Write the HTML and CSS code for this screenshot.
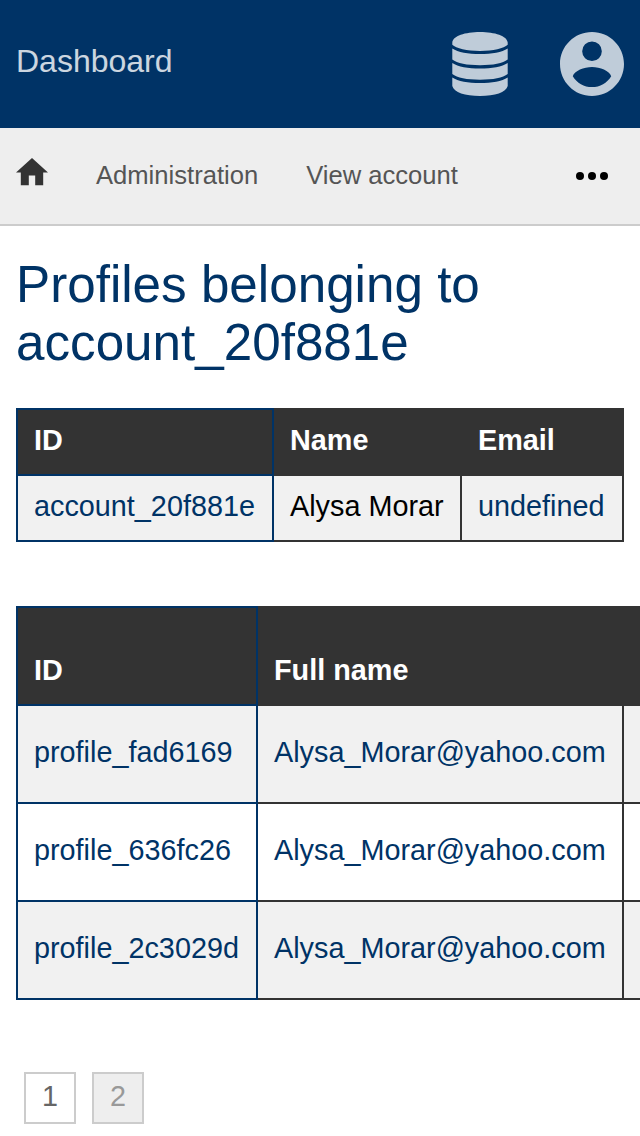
FILE: index.html
```html
<!DOCTYPE html>
<html lang="en">
<head>
<meta charset="utf-8">
<title>Dashboard</title>
<link rel="stylesheet" href="styles.css">
</head>
<body>
<header class="topbar">
  <a class="brand">Dashboard</a>
  <div class="actions">
    <svg class="icon-db" viewBox="0 0 56 64"><path d="M.3 10.500C1 4 13 0 28 0s27 4 27.700 10.500v2.300C52 16.500 41 19 28 19S4 16.500 .3 12.800zM.3 16.500C6 20.300 16 22 28 22s22-1.700 27.700-5.500V27.500C51 31.300 41 33.200 28 33.200S5 31.300 .3 27.500zM.3 31C6 34.800 16 36.500 28 36.500s22-1.700 27.700-5.500V42C51 45.800 41 47.700 28 47.700S5 45.800 .3 42zM.3 45.500C6 49.300 16 51 28 51s22-1.700 27.700-5.500V54C54 60.500 43 64 28 64S2 60.500 .3 54z"/></svg>
    <svg class="icon-user" viewBox="2 2 20 20"><path d="M12 2C6.480 2 2 6.480 2 12s4.480 10 10 10 10-4.480 10-10S17.520 2 12 2zm0 2.930a3.070 3.070 0 0 1 0 6.140 3.070 3.070 0 0 1 0-6.140zm0 14.270c-2.500 0-4.710-1.280-6-3.400.5-1.700 3.500-2.900 6-2.900s5.500 1.200 6 2.900c-1.290 2.120-3.500 3.400-6 3.400z"/></svg>
  </div>
</header>
<nav class="nav">
  <svg class="icon-home" viewBox="2 3 20 17"><path d="M10 20v-6h4v6h5v-8h3L12 3 2 12h3v8z"/></svg>
  <a class="nav-link">Administration</a>
  <a class="nav-link">View account</a>
  <svg class="icon-more" viewBox="0 0 32 8"><circle cx="4" cy="4" r="4"/><circle cx="16" cy="4" r="4"/><circle cx="28" cy="4" r="4"/></svg>
</nav>
<main class="content">
  <h1 class="title">Profiles belonging to account_20f881e</h1>
  <table class="grid account">
    <colgroup><col class="a-id"><col class="a-name"><col class="a-email"></colgroup>
    <thead><tr><th class="key">ID</th><th>Name</th><th>Email</th></tr></thead>
    <tbody><tr><td class="key"><a>account_20f881e</a></td><td>Alysa Morar</td><td><a>undefined</a></td></tr></tbody>
  </table>
  <div class="table-clip">
    <table class="grid profiles">
      <colgroup><col class="p-id"><col class="p-name"><col class="p-more"></colgroup>
      <thead><tr><th class="key">ID</th><th>Full name</th><th class="more"></th></tr></thead>
      <tbody>
        <tr><td class="key"><a>profile_fad6169</a></td><td><a>Alysa_Morar@yahoo.com</a></td><td class="more"></td></tr>
        <tr><td class="key"><a>profile_636fc26</a></td><td><a>Alysa_Morar@yahoo.com</a></td><td class="more"></td></tr>
        <tr><td class="key"><a>profile_2c3029d</a></td><td><a>Alysa_Morar@yahoo.com</a></td><td class="more"></td></tr>
      </tbody>
    </table>
  </div>
  <div class="pager"><a class="page">1</a><a class="page current">2</a></div>
</main>
</body>
</html>
```
FILE: styles.css
```css
* { box-sizing: border-box; }
body {
  margin: 0;
  height: 1136px;
  overflow: hidden;
  background: #fff;
  color: #000;
  font-family: "Liberation Sans", Arial, sans-serif;
  font-size: 28.8px;
}
svg { display: block; flex: none; }
.topbar {
  display: flex;
  align-items: center;
  justify-content: space-between;
  height: 128px;
  padding: 0 16px;
  background: #003366;
}
.brand { font-size: 32px; line-height: 36px; padding-bottom: 6px; color: #fff; opacity: .8; }
.actions { display: flex; gap: 52px; fill: #bfccd9; }
.icon-db { width: 56px; height: 64px; }
.icon-user { width: 64px; height: 64px; }
.nav {
  display: flex;
  align-items: center;
  height: 98px;
  padding: 0 32px 0 16px;
  background: #eee;
  border-bottom: 2px solid #ccc;
  font-size: 25.6px;
  line-height: 30px;
}
.icon-home { width: 32px; height: 27.2px; margin-bottom: 8px; fill: #333; }
.nav-link { margin-left: 48px; padding-bottom: 2px; color: #555; }
.icon-more { width: 32px; height: 8px; margin-left: auto; }
.content { padding: 30px 16px 0; }
.title { margin: 0 0 36px; font-size: 51.2px; line-height: 58px; font-weight: 400; color: #003366; }
.grid { table-layout: fixed; border-collapse: collapse; line-height: 32px; }
.grid th, .grid td {
  padding: 0 16px;
  border: 2px solid #333;
  text-align: left;
  vertical-align: top;
  white-space: nowrap;
}
.grid th { background: #333; color: #fff; }
.grid .key { border-color: #003366; }
.grid a { color: #003366; }
.grid tbody tr:nth-child(odd) { background: #f1f1f1; }
.account { width: 608px; margin-bottom: 64px; }
.account tr { height: 66px; }
.account th, .account td { padding-top: 14px; }
.a-id { width: 256px; }
.a-name { width: 188px; }
.a-email { width: 162px; }
.table-clip { margin-right: -16px; overflow: hidden; }
.profiles { width: 624px; }
.profiles tr { height: 98px; }
.profiles th { padding-top: 46px; }
.profiles td { padding-top: 30px; }
.profiles .more { padding-left: 0; padding-right: 0; border-right: 0; }
.p-id { width: 240px; }
.p-name { width: 366px; }
.p-more { width: 17px; }
.pager { display: flex; gap: 16px; padding: 72px 8px 0; }
.page {
  width: 52px;
  height: 52px;
  border: 2px solid #ccc;
  line-height: 45px;
  text-align: center;
  color: #666;
}
.page.current { background: #eee; color: #999; }
```
